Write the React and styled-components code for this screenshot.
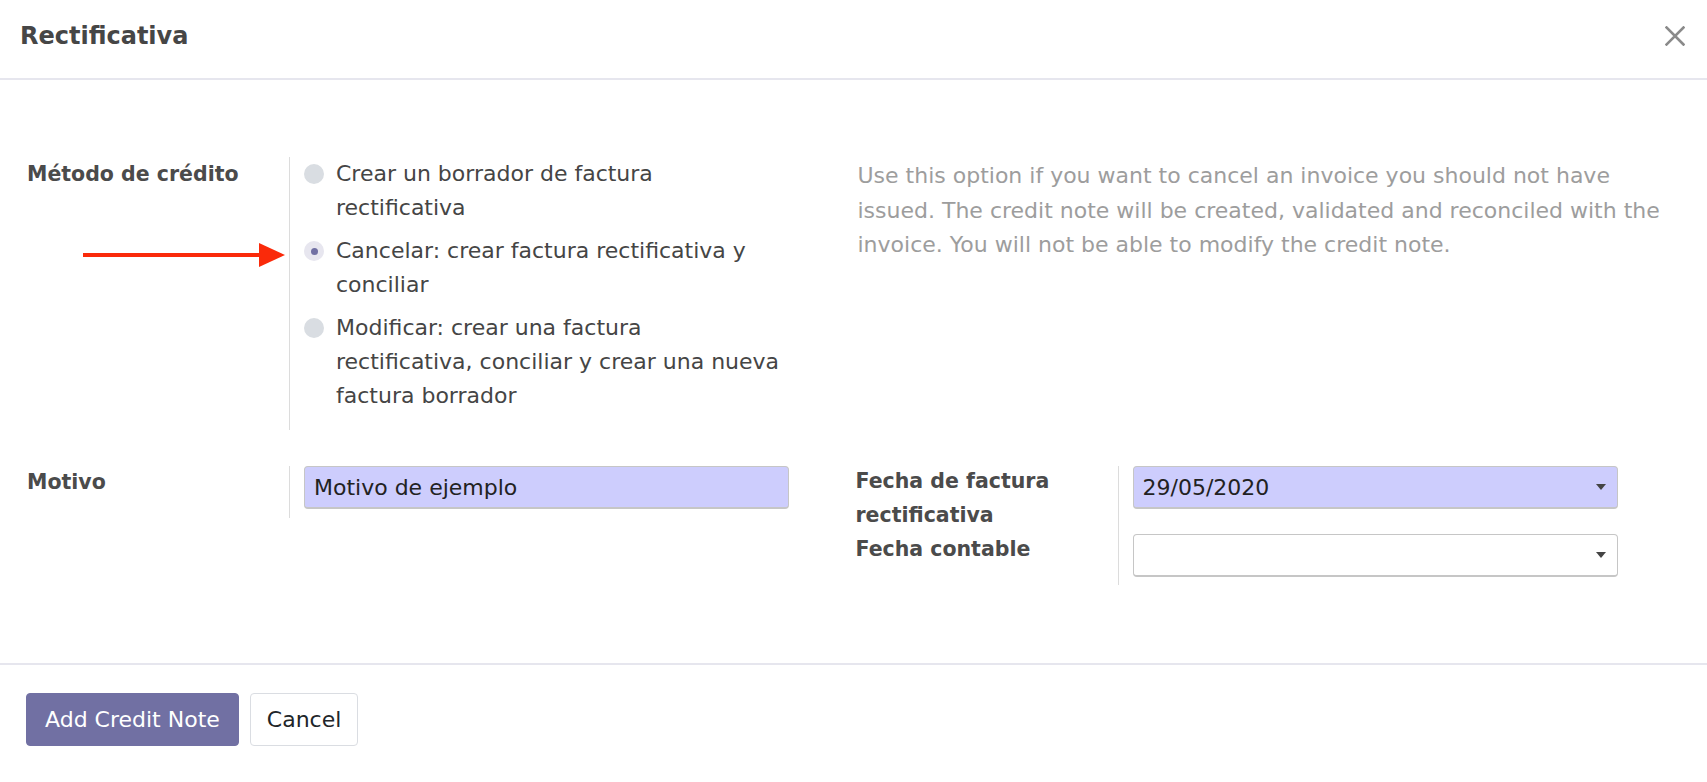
import React from "react";
import styled, { createGlobalStyle } from "styled-components";

const Global = createGlobalStyle`
  html, body { margin: 0; padding: 0; background: #ffffff; }
  body { font-family: "DejaVu Sans", "Liberation Sans", sans-serif; color: #444444; }
  * { box-sizing: border-box; }
`;

const Dialog = styled.div`
  display: flex;
  flex-direction: column;
  height: 100vh;
  background: #ffffff;
`;

const Header = styled.header`
  height: 80px;
  display: flex;
  align-items: center;
  justify-content: space-between;
  padding: 0 22px 6px 20px;
  border-bottom: 2px solid #e6e6ee;
`;

const Title = styled.h1`
  margin: 0;
  font-size: 24px;
  font-weight: bold;
  color: #464646;
`;

const CloseButton = styled.button`
  border: 0;
  background: none;
  padding: 0;
  width: 20px;
  height: 20px;
  display: flex;
  cursor: pointer;
`;

const Body = styled.main`
  flex: 1;
  padding: 77px 27px 0 27px;
  display: flex;
  flex-direction: column;
  gap: 36px;
`;

const Halves = styled.div`
  position: relative;
  display: grid;
  grid-template-columns: 1fr 1fr;
`;

const Half = styled.div`
  display: flex;
  flex-direction: column;
  padding-left: ${(p) => (p.$right ? "2px" : "0")};
`;

const FieldRow = styled.div`
  display: grid;
  grid-template-columns: 262px 1fr;
`;

const Label = styled.div`
  font-size: 20.5px;
  font-weight: bold;
  line-height: 34px;
  color: #4b4b4b;
  padding-right: 12px;
  margin-top: ${(p) => p.$offset || 0}px;
`;

const FieldCell = styled.div`
  border-left: 1px solid #dcdcdc;
  padding: 0 0 ${(p) => p.$pb ?? 9}px 14px;
  min-height: ${(p) => p.$minh || 0}px;
`;

const RadioList = styled.div`
  width: 485px;
  display: flex;
  flex-direction: column;
  gap: 9px;
`;

const RadioOption = styled.label`
  display: flex;
  align-items: flex-start;
  gap: 12px;
  font-size: 22px;
  line-height: 34px;
  color: #454545;
  cursor: pointer;
`;

const RadioText = styled.span`
  max-width: 445px;
`;

const RadioDot = styled.span`
  flex: none;
  width: 20px;
  height: 20px;
  margin-top: 7px;
  border-radius: 50%;
  background: ${(p) => (p.$checked ? "#e7e6ef" : "#d9dde2")};
  display: flex;
  align-items: center;
  justify-content: center;
  &::after {
    content: "";
    display: ${(p) => (p.$checked ? "block" : "none")};
    width: 7px;
    height: 7px;
    border-radius: 50%;
    background: #7170a3;
  }
`;

const HelpText = styled.p`
  margin: 2px 0 0 0;
  padding-left: 2px;
  font-size: 22px;
  line-height: 34.5px;
  color: #9d9d9d;
`;

const TextInput = styled.div`
  width: 485px;
  height: 43px;
  display: flex;
  align-items: center;
  justify-content: space-between;
  padding: 0 11px 0 9px;
  border: 1px solid #c6c6c6;
  border-bottom-width: 2px;
  border-radius: 4px;
  background: ${(p) => (p.$required ? "#cdcdfd" : "#ffffff")};
  font-size: 22px;
  color: #222222;
`;

const Caret = styled.span`
  width: 0;
  height: 0;
  border-left: 5px solid transparent;
  border-right: 5px solid transparent;
  border-top: 6px solid #444444;
`;

const Arrow = styled.svg`
  position: absolute;
  left: 56px;
  top: 85px;
`;

const Footer = styled.footer`
  border-top: 2px solid #e6e6ee;
  padding: 28px 26px 36px;
  display: flex;
  gap: 11px;
`;

const Button = styled.button`
  height: 53px;
  padding: 0 ${(p) => (p.$primary ? "18px" : "16px")};
  border-radius: 4px;
  border: 1px solid ${(p) => (p.$primary ? "#7170a3" : "#dadde2")};
  background: ${(p) => (p.$primary ? "#7170a3" : "#ffffff")};
  color: ${(p) => (p.$primary ? "#ffffff" : "#212529")};
  font-family: "DejaVu Sans", "Liberation Sans", sans-serif;
  font-size: 22px;
  cursor: pointer;
`;

const options = [
  { text: "Crear un borrador de factura rectificativa", checked: false },
  { text: "Cancelar: crear factura rectificativa y conciliar", checked: true },
  { text: "Modificar: crear una factura rectificativa, conciliar y crear una nueva factura borrador", checked: false },
];

export default function App() {
  return (
    <>
      <Global />
      <Dialog>
        <Header>
          <Title>Rectificativa</Title>
          <CloseButton aria-label="Cerrar">
            <svg width="20" height="20" viewBox="0 0 20 20">
              <path d="M1.5 1.5 L18.5 18.5 M18.5 1.5 L1.5 18.5" stroke="#8a8a8a" strokeWidth="2.6" strokeLinecap="square" />
            </svg>
          </CloseButton>
        </Header>
        <Body>
          <Halves>
            <Half>
              <FieldRow>
                <Label>Método de crédito</Label>
                <FieldCell $pb={17}>
                  <RadioList>
                    {options.map((o) => (
                      <RadioOption key={o.text}>
                        <RadioDot $checked={o.checked} />
                        <RadioText>{o.text}</RadioText>
                      </RadioOption>
                    ))}
                  </RadioList>
                </FieldCell>
              </FieldRow>
            </Half>
            <Half $right>
              <HelpText>
                Use this option if you want to cancel an invoice you should not have issued. The credit note will be created, validated and reconciled with the invoice. You will not be able to modify the credit note.
              </HelpText>
            </Half>
            <Arrow width="202" height="26" viewBox="0 0 202 26">
              <rect x="0" y="11" width="178" height="4" fill="#fa2a0a" />
              <polygon points="176,1 202,13 176,25" fill="#fa2a0a" />
            </Arrow>
          </Halves>
          <Halves>
            <Half>
              <FieldRow>
                <Label $offset={-1}>Motivo</Label>
                <FieldCell $pb={9}>
                  <TextInput $required>Motivo de ejemplo</TextInput>
                </FieldCell>
              </FieldRow>
            </Half>
            <Half $right>
              <FieldRow>
                <Label $offset={-2}>Fecha de factura rectificativa</Label>
                <FieldCell $pb={0} $minh={68}>
                  <TextInput $required>
                    <span>29/05/2020</span>
                    <Caret />
                  </TextInput>
                </FieldCell>
              </FieldRow>
              <FieldRow>
                <Label $offset={-2}>Fecha contable</Label>
                <FieldCell $pb={8}>
                  <TextInput>
                    <span></span>
                    <Caret />
                  </TextInput>
                </FieldCell>
              </FieldRow>
            </Half>
          </Halves>
        </Body>
        <Footer>
          <Button $primary>Add Credit Note</Button>
          <Button>Cancel</Button>
        </Footer>
      </Dialog>
    </>
  );
}
